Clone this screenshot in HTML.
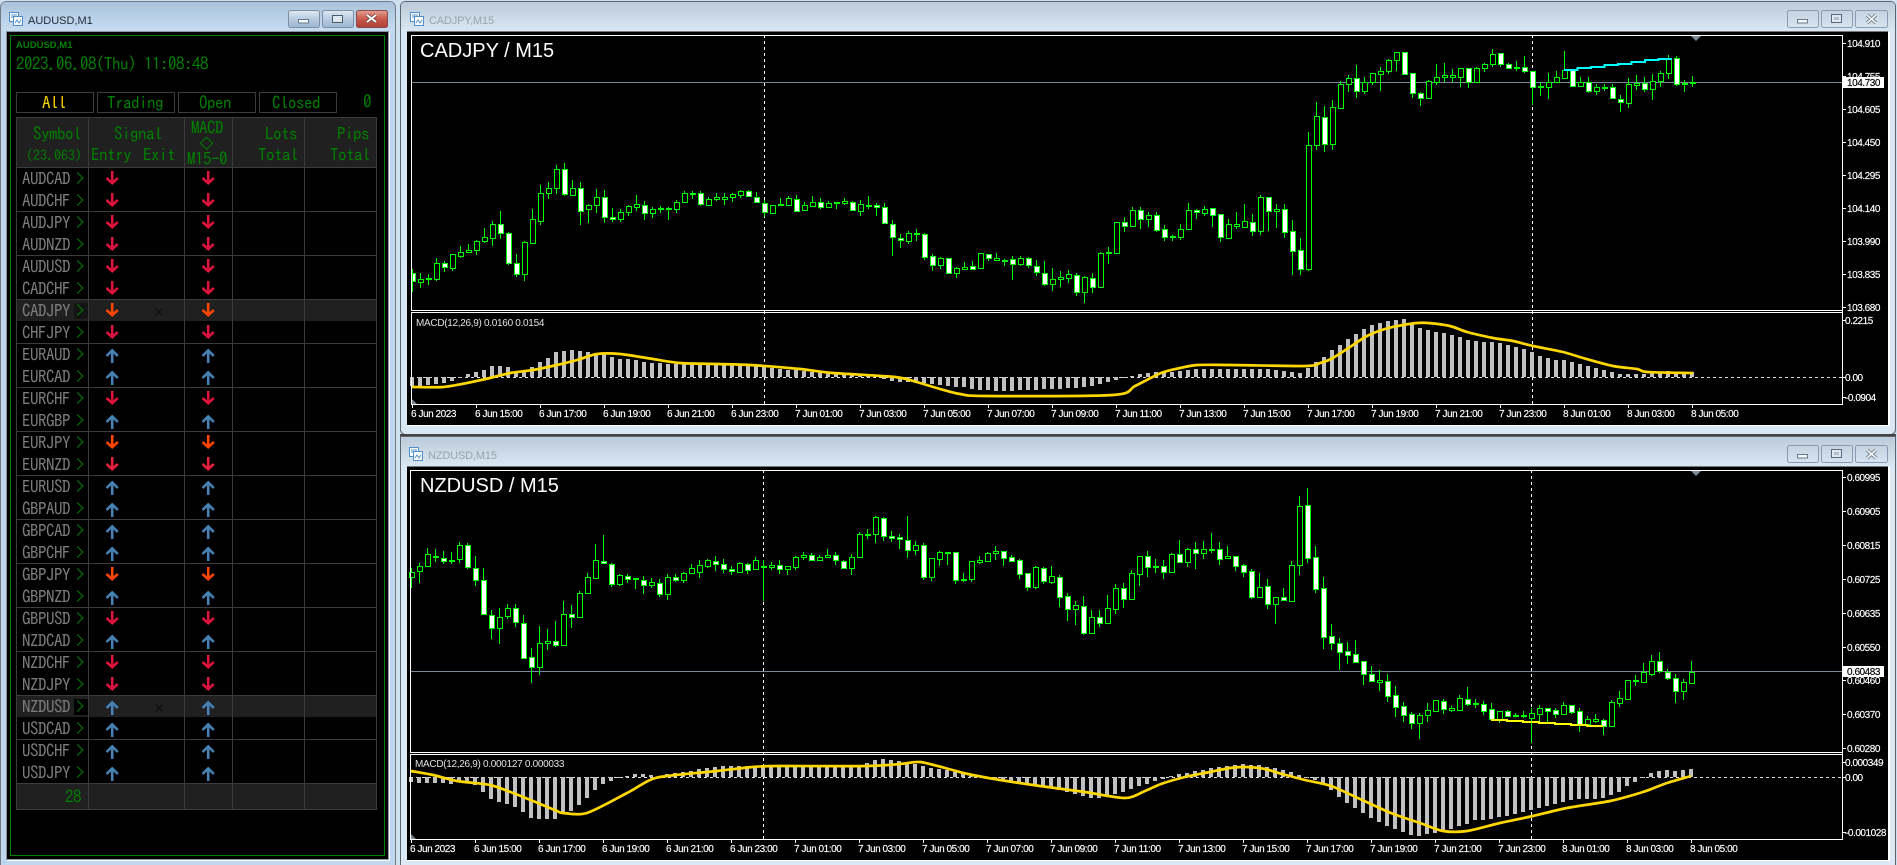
<!DOCTYPE html>
<html lang="en">
<head>
<meta charset="utf-8">
<title>MT4 Charts</title>
<style>
html,body{margin:0;padding:0;background:#cfe0f1;width:1897px;height:865px;overflow:hidden}
svg{display:block}
.g{font-family:"IPAGothic","Liberation Mono",monospace;font-size:17px;letter-spacing:-.5px;fill:#008000}
.s{fill:#7c7c7c}
.p{font-family:"Liberation Sans",sans-serif;font-size:10px;letter-spacing:-.45px;fill:#fff;stroke:#fff;stroke-width:.15px}
.m{font-family:"Liberation Sans",sans-serif;font-size:10px;letter-spacing:-.3px;fill:#e0e0e0}
.t{font-family:"Liberation Sans",sans-serif;font-size:20px;fill:#fff}
.w{font-family:"Liberation Sans",sans-serif;font-size:11px;fill:#1c2a38}
.i{font-family:"Liberation Sans",sans-serif;font-size:11px;fill:#98a3ae;letter-spacing:-.15px}
</style>
</head>
<body>
<svg xmlns="http://www.w3.org/2000/svg" width="1897" height="865" viewBox="0 0 1897 865">
<defs>
<linearGradient id="a" x1="0" y1="0" x2="0" y2="1"><stop offset="0" stop-color="#a9c3dc"/><stop offset="1" stop-color="#c8ddf2"/></linearGradient>
<linearGradient id="b" x1="0" y1="0" x2="0" y2="1"><stop offset="0" stop-color="#bccbd9"/><stop offset="1" stop-color="#d9e7f4"/></linearGradient>
<linearGradient id="c" x1="0" y1="0" x2="0" y2="1"><stop offset="0" stop-color="#dfe9f3"/><stop offset=".5" stop-color="#b7cbdf"/><stop offset="1" stop-color="#9db6d0"/></linearGradient>
<linearGradient id="d" x1="0" y1="0" x2="0" y2="1"><stop offset="0" stop-color="#e2a094"/><stop offset=".5" stop-color="#c8584c"/><stop offset="1" stop-color="#b04038"/></linearGradient>
<g id="ic" fill="#fff" stroke="#4f8fd0" stroke-width="1">
<rect x=".5" y=".5" width="9" height="9"/><rect x="4.5" y="4.5" width="9" height="9"/>
<path d="M6 11l2-3 2 3 2-3" fill="none"/><path d="M2 3h6M2 5h2" fill="none"/>
</g>
<g id="bm"><rect x=".5" y=".5" width="31" height="17" rx="2" fill="none" stroke="#8a9ab0"/><rect x="10.500" y="9.500" width="10" height="3.500" fill="#f4f8fc" stroke="#6a7a8c"/></g>
<g id="bx"><rect x=".5" y=".5" width="31" height="17" rx="2" fill="none" stroke="#8a9ab0"/><rect x="10.500" y="4.500" width="10" height="8" fill="#dfe8f1" stroke="#5a6a7c"/><rect x="13" y="7" width="5" height="3" fill="#b0c0d0"/></g>
<g id="bc"><rect x=".5" y=".5" width="32" height="17" rx="2" fill="none" stroke="#8a9ab0"/><path d="M12 5l9 8M21 5l-9 8" stroke="#66707c" stroke-width="3.4"/><path d="M12 5l9 8M21 5l-9 8" stroke="#f4f7fa" stroke-width="1.8"/></g>
</defs>

<!-- left window -->
<rect x="0" y="0" width="1897" height="865" fill="#cfe0f1"/>
<rect x=".5" y="1.500" width="395" height="870" rx="6" fill="#c0d6ec" stroke="#707a84"/>
<rect x="1" y="2" width="394" height="30" rx="5" fill="url(#a)"/>
<use href="#ic" x="9" y="12"/>
<text class="w" x="28" y="24">AUDUSD,M1</text>
<rect x="288.500" y="10.500" width="31" height="17" rx="2" fill="url(#c)" stroke="#7d8ea2"/>
<rect x="298.500" y="19.500" width="10" height="3.500" fill="#f6f9fc" stroke="#6a7a8c"/>
<rect x="322.500" y="10.500" width="31" height="17" rx="2" fill="url(#c)" stroke="#7d8ea2"/>
<rect x="332.500" y="15.500" width="10" height="7" fill="#dfe8f1" stroke="#4c5a6a"/>
<rect x="356.500" y="10.500" width="31" height="17" rx="2" fill="url(#d)" stroke="#8c4a44"/>
<path d="M367 15l9 7M376 15l-9 7" stroke="#6a3834" stroke-width="3.400"/><path d="M367 15l9 7M376 15l-9 7" stroke="#fff" stroke-width="2"/>
<rect x="7" y="32" width="383" height="829" fill="#fff"/>
<rect x="6.500" y="31.500" width="382" height="828" fill="#000" stroke="#8896a4"/>
<rect x="10.500" y="35.500" width="374" height="820" fill="none" stroke="#008000"/>
<text x="16" y="48" style="font:bold 9.500px 'Liberation Sans',sans-serif;fill:#008000">AUDUSD,M1</text>
<text class="g" x="16" y="70">2023.06.08(Thu) 11:08:48</text>
<g fill="#000" stroke="#3c3c3c" shape-rendering="crispEdges">
<rect x="16.500" y="92.500" width="77" height="20"/><rect x="97.500" y="92.500" width="77" height="20"/><rect x="178.500" y="92.500" width="77" height="20"/><rect x="259.500" y="92.500" width="77" height="20"/>
</g>
<text class="g" x="42" y="109" style="fill:#ffd700">All</text>
<text class="g" x="107" y="109">Trading</text>
<text class="g" x="199" y="109">Open</text>
<text class="g" x="272" y="109">Closed</text>
<text class="g" x="363" y="108">0</text>
<g shape-rendering="crispEdges">
<rect x="16" y="117" width="360" height="50" fill="#202020"/>
<rect x="16" y="299" width="360" height="22" fill="#202020"/>
<rect x="16" y="695" width="360" height="22" fill="#202020"/>
<rect x="16" y="783" width="360" height="26" fill="#202020"/>
<rect x="74" y="303" width="15" height="16" fill="#141414"/>
<rect x="74" y="699" width="15" height="16" fill="#000"/>
<path id="grid" stroke="#3c3c3c" fill="none" d="M16.500 117v692M88.500 117v692M184.500 117v692M232.500 117v692M304.500 117v692M376.500 117v692M16 117.500h361M16 167.500h361M16 211.500h361M16 255.500h361M16 299.500h361M16 343.500h361M16 387.500h361M16 431.500h361M16 475.500h361M16 519.500h361M16 563.500h361M16 607.500h361M16 651.500h361M16 695.500h361M16 739.500h361M16 783.500h361M16 809.500h361"/>
</g>
<text class="g" x="33" y="140">Symbol</text>
<text class="g" x="26" y="160" style="font-size:14px;letter-spacing:0">(23.063)</text>
<text class="g" x="114" y="140">Signal</text>
<text class="g" x="91" y="161">Entry</text>
<text class="g" x="143" y="161">Exit</text>
<text class="g" x="191" y="134">MACD</text>
<text class="g" x="199" y="149" style="font-size:15px;letter-spacing:0">◇</text>
<text class="g" x="187" y="165">M15-0</text>
<text class="g" x="265" y="140">Lots</text>
<text class="g" x="258" y="161">Total</text>
<text class="g" x="337" y="140">Pips</text>
<text class="g" x="330" y="161">Total</text>
<g transform="translate(0,1)">
<text class="g s" x="22" y="184">AUDCAD</text><text class="g s" x="22" y="206">AUDCHF</text>
<text class="g s" x="22" y="228">AUDJPY</text><text class="g s" x="22" y="250">AUDNZD</text>
<text class="g s" x="22" y="272">AUDUSD</text><text class="g s" x="22" y="294">CADCHF</text>
<text class="g s" x="22" y="316">CADJPY</text><text class="g s" x="22" y="338">CHFJPY</text>
<text class="g s" x="22" y="360">EURAUD</text><text class="g s" x="22" y="382">EURCAD</text>
<text class="g s" x="22" y="404">EURCHF</text><text class="g s" x="22" y="426">EURGBP</text>
<text class="g s" x="22" y="448">EURJPY</text><text class="g s" x="22" y="470">EURNZD</text>
<text class="g s" x="22" y="492">EURUSD</text><text class="g s" x="22" y="514">GBPAUD</text>
<text class="g s" x="22" y="536">GBPCAD</text><text class="g s" x="22" y="558">GBPCHF</text>
<text class="g s" x="22" y="580">GBPJPY</text><text class="g s" x="22" y="602">GBPNZD</text>
<text class="g s" x="22" y="624">GBPUSD</text><text class="g s" x="22" y="646">NZDCAD</text>
<text class="g s" x="22" y="668">NZDCHF</text><text class="g s" x="22" y="690">NZDJPY</text>
<text class="g s" x="22" y="712">NZDUSD</text><text class="g s" x="22" y="734">USDCAD</text>
<text class="g s" x="22" y="756">USDCHF</text><text class="g s" x="22" y="778">USDJPY</text>
</g>
<text class="g" x="65" y="803">28</text>
<g id="tbl"></g>
<path d="M155.500 308.500l7 7M162.500 308.500l-7 7M155.500 704.500l7 7M162.500 704.500l-7 7" stroke="#0c0c0c" fill="none"/>

<!-- top chart window -->
<rect x="400.500" y="1.500" width="1495" height="433" rx="5" fill="#d9e7f4" stroke="#5c646c"/>
<rect x="401" y="2" width="1494" height="29" rx="4" fill="url(#b)"/>
<use href="#ic" x="410" y="12"/>
<text class="i" x="429" y="24">CADJPY,M15</text>
<use href="#bm" x="1787" y="10"/><use href="#bx" x="1821" y="10"/><use href="#bc" x="1855" y="10"/>
<rect x="407" y="32" width="1483" height="394" fill="#fff"/>
<rect x="407" y="31" width="1481" height="394" fill="#000"/>
<rect x="407" y="31" width="1481" height="1" fill="#777"/>
<path d="M400 434.500h1496M400 435.500h1496" stroke="#444"/>

<!-- bottom chart window -->
<rect x="400.500" y="436.500" width="1495" height="440" fill="#dce9f5" stroke="#5c646c"/>
<rect x="401" y="437" width="1494" height="29" fill="url(#b)"/>
<use href="#ic" x="409" y="447"/>
<text class="i" x="428" y="459">NZDUSD,M15</text>
<use href="#bm" x="1787" y="445"/><use href="#bx" x="1821" y="445"/><use href="#bc" x="1855" y="445"/>
<rect x="407" y="467" width="1483" height="394" fill="#fff"/>
<rect x="407" y="466" width="1481" height="394" fill="#000"/>
<rect x="407" y="466" width="1481" height="1" fill="#777"/>

<g id="c1"></g>
<g id="c2"></g>

<!-- chart 1 text -->
<text class="t" x="420" y="57">CADJPY / M15</text>
<text class="m" x="416" y="326">MACD(12,26,9) 0.0160 0.0154</text>
<g>
<text class="p" x="1847" y="47">104.910</text>
<text class="p" x="1847" y="80">104.755</text>
<rect x="1843" y="77" width="41" height="11" fill="#fff"/>
<text class="p" x="1847" y="86" style="fill:#000;stroke:#000">104.730</text>
<text class="p" x="1847" y="113">104.605</text>
<text class="p" x="1847" y="146">104.450</text>
<text class="p" x="1847" y="179">104.295</text>
<text class="p" x="1847" y="212">104.140</text>
<text class="p" x="1847" y="245">103.990</text>
<text class="p" x="1847" y="278">103.835</text>
<text class="p" x="1847" y="311">103.680</text>
<text class="p" x="1845" y="324">0.2215</text>
<text class="p" x="1845" y="381">0.00</text>
<text class="p" x="1845" y="401">-0.0904</text>
<text class="p" x="411" y="417">6 Jun 2023</text>
<text class="p" x="475" y="417">6 Jun 15:00</text>
<text class="p" x="539" y="417">6 Jun 17:00</text>
<text class="p" x="603" y="417">6 Jun 19:00</text>
<text class="p" x="667" y="417">6 Jun 21:00</text>
<text class="p" x="731" y="417">6 Jun 23:00</text>
<text class="p" x="795" y="417">7 Jun 01:00</text>
<text class="p" x="859" y="417">7 Jun 03:00</text>
<text class="p" x="923" y="417">7 Jun 05:00</text>
<text class="p" x="987" y="417">7 Jun 07:00</text>
<text class="p" x="1051" y="417">7 Jun 09:00</text>
<text class="p" x="1115" y="417">7 Jun 11:00</text>
<text class="p" x="1179" y="417">7 Jun 13:00</text>
<text class="p" x="1243" y="417">7 Jun 15:00</text>
<text class="p" x="1307" y="417">7 Jun 17:00</text>
<text class="p" x="1371" y="417">7 Jun 19:00</text>
<text class="p" x="1435" y="417">7 Jun 21:00</text>
<text class="p" x="1499" y="417">7 Jun 23:00</text>
<text class="p" x="1563" y="417">8 Jun 01:00</text>
<text class="p" x="1627" y="417">8 Jun 03:00</text>
<text class="p" x="1691" y="417">8 Jun 05:00</text>
</g>

<!-- chart 2 text -->
<text class="t" x="420" y="492">NZDUSD / M15</text>
<text class="m" x="415" y="767">MACD(12,26,9) 0.000127 0.000033</text>
<g>
<text class="p" x="1847" y="481">0.60995</text>
<text class="p" x="1847" y="515">0.60905</text>
<text class="p" x="1847" y="549">0.60815</text>
<text class="p" x="1847" y="583">0.60725</text>
<text class="p" x="1847" y="617">0.60635</text>
<text class="p" x="1847" y="651">0.60550</text>
<text class="p" x="1847" y="684">0.60460</text>
<rect x="1843" y="666" width="41" height="11" fill="#fff"/>
<text class="p" x="1847" y="675" style="fill:#000;stroke:#000">0.60483</text>
<text class="p" x="1847" y="718">0.60370</text>
<text class="p" x="1847" y="752">0.60280</text>
<text class="p" x="1845" y="766">0.000349</text>
<text class="p" x="1845" y="781">0.00</text>
<text class="p" x="1845" y="836">-0.001028</text>
<text class="p" x="410" y="852">6 Jun 2023</text>
<text class="p" x="474" y="852">6 Jun 15:00</text>
<text class="p" x="538" y="852">6 Jun 17:00</text>
<text class="p" x="602" y="852">6 Jun 19:00</text>
<text class="p" x="666" y="852">6 Jun 21:00</text>
<text class="p" x="730" y="852">6 Jun 23:00</text>
<text class="p" x="794" y="852">7 Jun 01:00</text>
<text class="p" x="858" y="852">7 Jun 03:00</text>
<text class="p" x="922" y="852">7 Jun 05:00</text>
<text class="p" x="986" y="852">7 Jun 07:00</text>
<text class="p" x="1050" y="852">7 Jun 09:00</text>
<text class="p" x="1114" y="852">7 Jun 11:00</text>
<text class="p" x="1178" y="852">7 Jun 13:00</text>
<text class="p" x="1242" y="852">7 Jun 15:00</text>
<text class="p" x="1306" y="852">7 Jun 17:00</text>
<text class="p" x="1370" y="852">7 Jun 19:00</text>
<text class="p" x="1434" y="852">7 Jun 21:00</text>
<text class="p" x="1498" y="852">7 Jun 23:00</text>
<text class="p" x="1562" y="852">8 Jun 01:00</text>
<text class="p" x="1626" y="852">8 Jun 03:00</text>
<text class="p" x="1690" y="852">8 Jun 05:00</text>
</g>
</svg>
<script>
var NS="http://www.w3.org/2000/svg";
function el(p,n,a){var e=document.createElementNS(NS,n);for(var k in a)e.setAttribute(k,a[k]);p.appendChild(e);return e}
/* smooth polyline string into a Catmull-Rom bezier path */
function smooth(str){
 var P=str.split(" ").map(function(s){return s.split(",").map(Number)}),d="M"+P[0][0]+" "+P[0][1],k=.14;
 for(var i=0;i<P.length-1;i++){
  var a=P[Math.max(i-1,0)],b=P[i],c=P[i+1],e=P[Math.min(i+2,P.length-1)];
  d+="C"+(b[0]+(c[0]-a[0])*k).toFixed(1)+" "+(b[1]+(c[1]-a[1])*k).toFixed(1)+" "+(c[0]-(e[0]-b[0])*k).toFixed(1)+" "+(c[1]-(e[1]-b[1])*k).toFixed(1)+" "+c[0]+" "+c[1];
 }
 return d;
}
/* table arrows & chevrons */
(function(){
var sig="rrrrrrorbbrboRbbbbobrbrrbbbb".split("");
var col={r:"#dc143c",R:"#e6203c",o:"#ff4500",b:"#4682b4"},t=document.getElementById("tbl");
for(var i=0;i<28;i++){
 var cy=178+22*i,c=sig[i],up=c=="b";
 el(t,"path",{d:"M77 "+(cy-5.5)+"L83 "+cy+"L77 "+(cy+5.5),fill:"none",stroke:"#008000"});
 [112,208].forEach(function(x){
  var d=up?"M"+(x+.2)+" "+(cy+9)+"V"+(cy-4)+"M"+(x-5.5)+" "+(cy+2)+"L"+(x+.2)+" "+(cy-3.5)+"L"+(x+5.8)+" "+(cy+2)
          :"M"+(x+.2)+" "+(cy-7)+"V"+(cy+5.5)+"M"+(x-5.5)+" "+(cy)+"L"+(x+.2)+" "+(cy+5.2)+"L"+(x+5.8)+" "+(cy);
  el(t,"path",{d:d,fill:"none",stroke:col[c],"stroke-width":2.6});
 });
}
})();
var C1="269,273,281,292f 273,279,282,288 274,278,279,285 258,263,279,281 261,263,267,272f 254,254,268,271 246,252,256,258 244,250,252,252 240,241,250,255 228,237,241,243 221,224,238,246 211,224,233,239f 232,233,263,265f 254,263,274,277f 241,242,274,281 209,219,243,243 185,193,221,225 182,188,193,199 165,169,188,194 163,169,194,196f 180,188,195,196 182,188,211,225f 204,205,209,223 189,197,205,213 190,197,217,223f 208,217,219,222f 209,212,219,222 205,206,212,216 195,204,207,211 201,205,213,220f 207,209,213,218 206,208,209,213 207,208,209,220 200,202,209,213 191,193,202,203 191,193,194,199 191,193,204,206f 197,199,205,206 193,197,199,201 193,197,199,205 193,194,197,202 190,191,195,198 190,191,196,196f 192,197,202,202f 200,203,212,217f 205,205,213,213 198,204,205,206 196,198,205,205 195,199,211,212f 202,205,210,211 196,202,206,206 198,202,207,209f 201,203,207,208 202,202,203,209 198,201,203,205 201,202,210,211f 200,204,211,216 196,205,206,209 203,205,207,216f 203,207,223,223f 220,224,237,256f 234,238,240,248f 231,233,241,244 229,233,234,241 233,234,257,260f 254,256,265,271f 257,258,265,269 258,258,273,274f 267,268,273,278 262,267,269,270 261,266,269,269f 253,253,268,268 254,254,258,261f 253,258,260,261 259,260,260,266 256,259,264,280f 256,258,264,266 257,258,265,268f 260,266,272,276f 261,273,284,286f 268,279,284,291 271,277,279,287 270,274,278,283 273,275,292,296f 276,277,292,303 273,278,287,293f 252,253,287,288 247,252,253,264 222,222,253,253 217,222,226,232f 207,210,226,227 207,210,219,229f 212,215,219,227 212,215,230,232f 225,229,237,241f 235,236,237,241 224,229,237,240 203,210,229,229 209,210,212,219f 206,209,213,216 208,208,215,227f 214,214,237,242f 219,224,238,239 212,224,226,229 204,221,227,228 214,222,231,236f 195,197,231,235 197,197,211,231f 204,209,211,228 204,209,232,238f 220,231,251,275f 238,250,269,275f 132,145,269,271 102,116,145,150 106,117,144,152f 100,107,144,150 81,84,108,109 75,78,84,92 65,78,91,98f 77,82,91,94 73,73,82,85 67,71,74,91 59,60,71,74 52,52,60,71 52,52,74,74f 73,73,93,98f 92,93,98,106f 80,81,98,98 64,77,82,85 63,75,77,82 69,75,77,82 68,68,77,87 68,68,82,88f 67,68,82,83 63,64,68,72 49,54,64,67 53,53,64,67f 63,64,68,69f 61,67,68,71 56,67,71,73f 71,71,87,105f 82,86,87,96 73,82,87,99 71,77,82,83 51,70,78,79 70,70,86,87f 77,82,86,87 77,82,91,93f 84,87,91,95 84,87,88,91 84,87,98,99f 95,99,102,112f 78,84,103,108 75,83,85,90 77,83,89,92f 74,81,89,100 71,73,81,87 55,58,73,79 56,58,84,86f 80,83,84,92 76,82,83,87";
var C2="568,572,577,588 563,566,571,583 548,554,566,567 549,556,557,562 551,558,561,564f 552,560,561,564 542,545,559,563 543,545,567,569f 556,568,580,586f 568,580,614,615f 610,615,628,639f 608,617,628,644 604,608,616,619 604,608,622,627f 615,623,658,659f 648,657,667,683f 626,643,667,675 629,641,643,650 621,641,645,647f 601,614,645,645 605,614,617,628f 591,593,617,618 573,577,593,594 544,560,578,579 535,561,563,564f 563,564,584,587f 574,575,584,586 574,576,579,583f 578,578,579,589 576,580,585,594f 578,582,585,588 579,583,594,597f 574,577,594,600 574,577,580,582f 572,573,580,583 564,568,573,573 560,565,572,578 559,560,566,568 556,561,564,571f 559,564,569,573f 566,569,571,575f 562,563,572,572 563,564,570,574f 557,560,569,570 560,566,567,601 562,565,567,570 560,565,569,574f 566,566,569,575 556,557,567,570 552,555,557,560 553,555,560,561f 555,557,560,561 549,555,557,558 552,555,560,565f 560,561,568,569f 554,557,568,575 532,534,557,558 529,534,535,539 516,517,534,543 517,518,536,541f 531,536,538,542f 534,537,539,549f 516,540,550,558f 541,545,550,555 543,545,577,580f 558,558,577,581 551,552,559,566 552,552,553,565 552,552,580,584f 573,579,580,582 561,561,579,582 556,560,562,564 552,553,561,562 546,551,553,560 551,551,558,566f 555,557,561,562f 559,560,574,579f 573,573,587,591f 566,567,587,589 567,568,581,584f 566,576,582,584 575,577,597,607f 593,596,609,621f 601,605,609,625 596,606,633,635f 610,617,633,633 610,617,623,627f 595,608,623,623 584,588,609,614 583,588,599,608f 570,573,599,599 556,556,574,586 551,556,567,577f 559,566,567,573 560,566,572,579f 553,554,572,572 540,554,562,563f 548,549,562,567 542,549,553,569f 541,549,553,559 533,549,550,553 542,549,559,565f 546,556,558,559 556,556,566,571f 564,565,572,577f 569,571,597,599f 573,587,597,597 579,586,604,609f 597,597,604,624 588,597,600,601f 561,565,601,602 496,506,565,575 488,505,558,563f 546,557,589,593f 577,588,637,649f 624,636,643,650f 638,643,652,670f 642,651,655,664f 640,654,662,663f 661,661,674,685f 666,674,681,681f 670,680,682,691 674,681,696,702f 686,695,707,717f 702,706,715,722f 712,714,723,729f 713,715,723,739 703,710,715,722 700,700,711,712 699,701,709,714f 706,708,710,712 695,698,710,710 687,699,704,706f 699,703,704,708 701,704,711,715f 703,709,719,720f 711,711,720,723 710,711,716,716f 713,715,716,717 711,715,716,718 708,713,718,743 705,708,714,722 708,708,711,722f 708,710,714,718f 702,705,714,715 705,705,712,714f 708,711,724,732f 716,719,724,725 714,719,721,723 719,720,726,735f 700,702,726,726 691,698,703,707 680,680,699,699 675,680,681,686 663,672,682,682 655,661,674,676 652,661,671,673f 669,672,678,680f 674,678,691,703f 679,682,691,700 661,672,683,684";
var H1=[-9,-9,-8,-7,-6,-4,-1,3,5,7,11,11,10,5,6,10,15,19,25,26,27,26,25,24,24,20,18,18,17,15,14,14,13,13,13,14,13,12,12,12,12,12,12,11,10,9,8,7,7,6,5,5,4,4,3,3,3,2,1,-2,-4,-5,-5,-6,-6,-7,-8,-9,-10,-10,-12,-13,-13,-14,-14,-14,-13,-13,-13,-12,-12,-12,-11,-11,-10,-9,-7,-5,-3,-1,1,3,4,5,5,5,6,7,8,8,8,8,8,8,8,8,8,8,7,6,5,4,9,15,20,27,32,38,43,48,52,54,56,57,58,54,49,47,45,44,42,40,37,36,35,35,34,32,30,28,25,21,19,17,17,15,13,11,9,7,5,3,3,3,3,4,5,6,5,4,5];
var H2=[-5,-6,-6,-6,-6,-7,-5,-5,-8,-15,-22,-25,-27,-30,-35,-41,-42,-42,-42,-36,-34,-28,-21,-13,-7,-4,-1,1,3,3,2,0,3,4,5,6,8,9,10,11,11,11,11,11,12,12,11,11,11,11,11,11,11,11,11,11,11,14,17,18,17,16,15,13,11,9,8,7,5,4,3,1,0,-1,-3,-4,-6,-7,-9,-10,-11,-13,-15,-17,-19,-21,-21,-20,-17,-15,-12,-9,-7,-4,-2,1,3,4,6,7,9,10,11,12,13,12,12,10,9,7,5,2,-1,-3,-6,-13,-20,-26,-31,-36,-41,-45,-49,-52,-55,-58,-59,-57,-56,-54,-52,-49,-47,-43,-43,-42,-40,-39,-37,-35,-33,-31,-29,-27,-25,-23,-22,-22,-22,-21,-18,-15,-9,-5,-1,4,6,7,6,7,8];
var S1="412,387 443,387 467,383 490,378 510,373 533,370 557,365 577,360 597,354 620,354 653,359 680,363 717,364 750,365 800,369 833,373 895,377 920,383 940,389 960,394 985,396 1113,395 1135,386 1161,373 1180,368 1198,365 1230,365 1306,366 1320,363 1331,359 1350,347 1367,336 1385,329 1403,325 1417,323 1428,323 1450,326 1467,332 1493,338 1513,341 1533,346 1563,352 1583,358 1613,366 1637,369 1647,372 1693,373";
var S2="411,771 433,775 457,781 490,785 513,793 533,801 557,811 563,813 587,813 627,793 650,780 667,776 717,771 753,767 777,766 867,766 900,764 920,762 945,768 968,774 1000,780 1040,786 1085,792 1125,798 1145,791 1161,784 1185,777 1210,772 1230,768 1246,767 1265,769 1282,774 1305,780 1331,786 1360,799 1391,813 1420,823 1443,831 1467,831 1500,823 1533,816 1567,808 1610,801 1643,792 1667,783 1691,776";
function chart(g,o){
 var R={"shape-rendering":"crispEdges"},x0=o.x0;
 el(g,"path",Object.assign({d:"M"+o.L+" "+(o.py+.5)+"H1842",stroke:"#778899"},R));
 var dd="M"+o.d1+" "+o.top+"V"+o.mb+"M"+o.d2+" "+o.top+"V"+o.mb;
 el(g,"path",Object.assign({d:dd,stroke:"#fff","stroke-dasharray":"3 3",fill:"none"},R));
 el(g,"path",Object.assign({d:"M"+o.L+" "+(o.zy+.5)+"H1842",stroke:"#ddd","stroke-dasharray":"3 3"},R));
 var h="";o.H.forEach(function(v,i){var x=x0+8*i-2;if(!v)return;h+="M"+x+" "+(v>0?o.zy-v:o.zy)+"h4v"+Math.abs(v)+"h-4z"});
 el(g,"path",Object.assign({d:h,fill:"#c0c0c0"},R));
 el(g,"path",{d:smooth(o.S),fill:"none",stroke:"#ffd700","stroke-width":2.7});
 var wick="",holl="",fill="";
 o.C.split(" ").forEach(function(s,i){
  var f=s.slice(-1)=="f",a=s.replace("f","").split(",").map(Number),x=x0+8*i;
  var H=a[0],T=a[1],B=a[2],L=a[3],X=x+.5;
  if(T>H)wick+="M"+X+" "+H+"V"+T;
  if(L>B)wick+="M"+X+" "+B+"V"+L;
  var rr="M"+(x-1.5)+" "+(T+.5)+"h5v"+Math.max(B-T,1)+"h-5z";
  if(i==0&&o.clip){rr="M"+(x+.5)+" "+(T+.5)+"h3v"+(B-T)+"h-3z"}
  if(f)fill+=rr;else holl+=rr;
 });
 el(g,"path",Object.assign({d:wick,stroke:"#00ff00",fill:"none"},R));
 el(g,"path",Object.assign({d:holl,stroke:"#00ff00",fill:"#000"},R));
 el(g,"path",Object.assign({d:fill,stroke:"#00ff00",fill:"#fff"},R));
 if(o.O)o.O(g);
 var fr="M"+(o.L+.5)+" "+o.top+"V"+(o.mt1+1)+"M"+(o.L+.5)+" "+o.mt+"V"+(o.mb+1)+
  "M"+o.L+" "+(o.top+.5)+"H1842M"+o.L+" "+(o.mt1+.5)+"H1842M"+o.L+" "+(o.mt+.5)+"H1842M"+o.L+" "+(o.mb+.5)+"H1842M1842.5 "+o.top+"V"+(o.mb+1);
 o.yt.forEach(function(y){fr+="M1843 "+(y+.5)+"h3"});
 for(var k=0;k<21;k++)fr+="M"+(x0+64*k+.5)+" "+(o.mb+1)+"v3";
 el(g,"path",Object.assign({d:fr,stroke:"#fff",fill:"none"},R));
 el(g,"path",{d:"M1691 "+(o.top+1)+"h10l-5 5z",fill:"#778899"});
 el(g,"path",{d:"M"+(o.L+1)+" "+(o.mb-5)+"l5 5h-5z",fill:"#778899"});
}
chart(document.getElementById("c1"),{x0:412,L:411,top:35,mt1:310,mt:312,mb:404,py:82,zy:377,d1:764.5,d2:1532.5,H:H1,S:S1,C:C1,clip:1,
 yt:[43,76,109,142,175,208,241,274,307,320,377,397],
 O:function(g){
  var p="";for(var i=0;i<8;i++){var a=1564+i*13.5,b=Math.round(70-i*1.6);p+=(i?"L":"M")+a+" "+b+"H"+(a+13.5)}
  el(g,"path",{d:p,stroke:"#00ffff",fill:"none","stroke-width":2,"shape-rendering":"crispEdges"});
 }});
chart(document.getElementById("c2"),{x0:411,L:410,top:470,mt1:752,mt:754,mb:839,py:671,zy:777,d1:763.5,d2:1531.5,H:H2,S:S2,C:C2,
 yt:[477,511,545,579,613,647,680,714,748,762,777,832],
 O:function(g){
  var p="";for(var i=0;i<7;i++){var a=1491+i*16,b=720+i;p+=(i?"L":"M")+a+" "+b+"H"+(a+16)}
  el(g,"path",{d:p,stroke:"#ffff00",fill:"none","stroke-width":2,"shape-rendering":"crispEdges"});
 }});
</script>
</body>
</html>
